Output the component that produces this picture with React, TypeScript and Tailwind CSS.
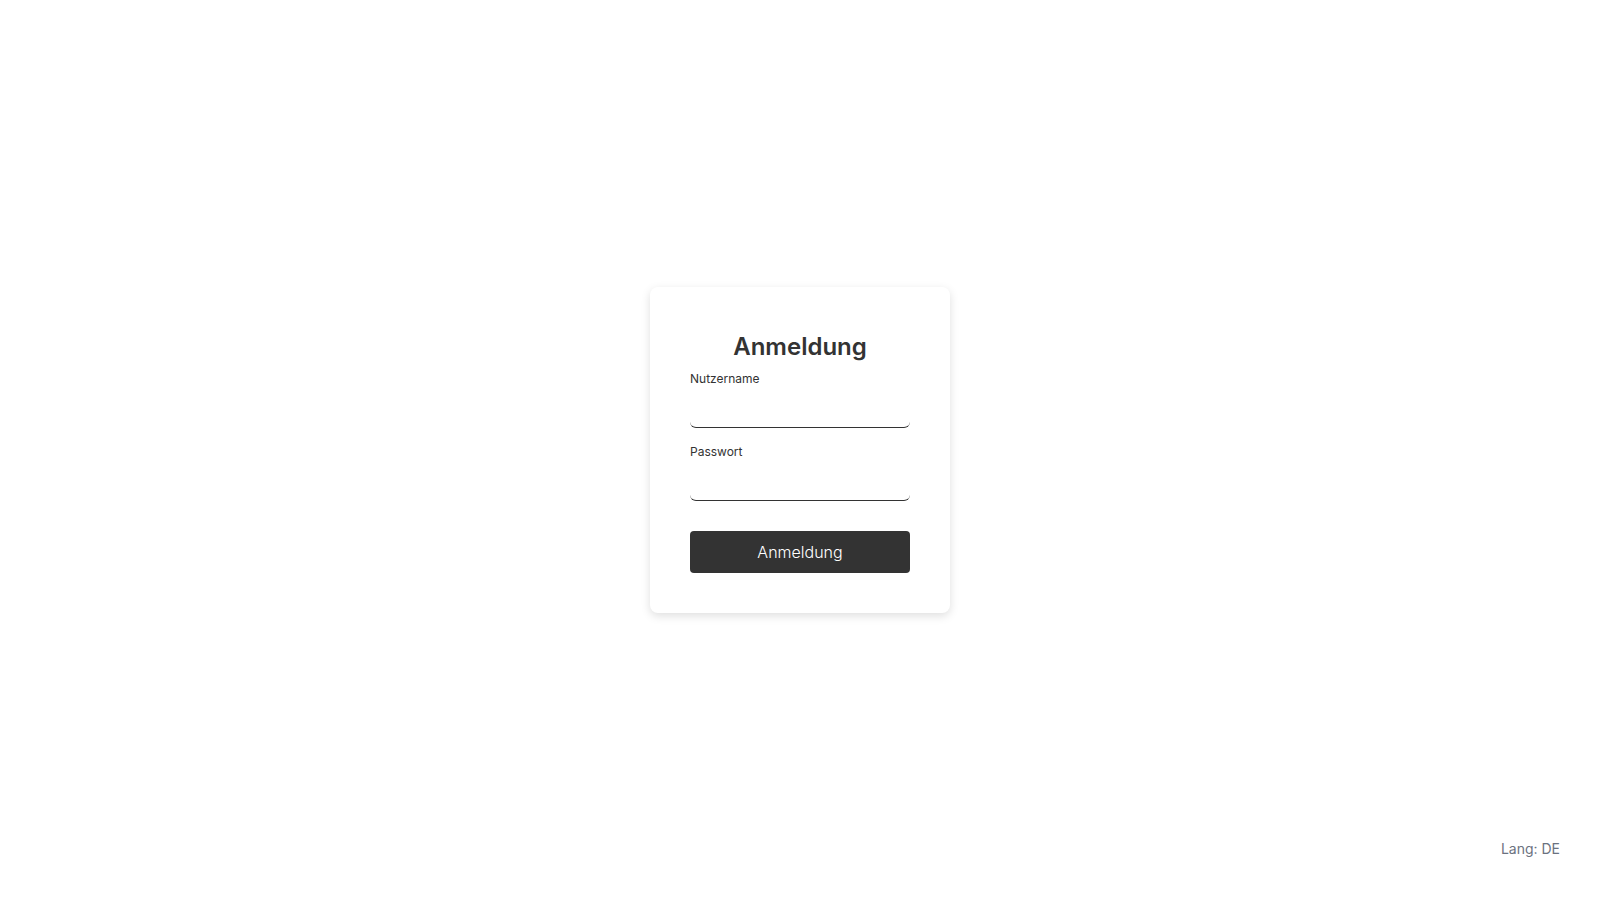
import { useState } from "react";

const font = { fontFamily: "Inter, 'Noto Sans', sans-serif" };

interface FieldProps {
  id: string;
  label: string;
  type: string;
  value: string;
  onChange: (v: string) => void;
}

const Field = ({ id, label, type, value, onChange }: FieldProps) => (
  <div className="flex flex-col">
    <label htmlFor={id} className="mb-[3px] text-[12px] leading-5 text-[#333333]">
      {label}
    </label>
    <input
      id={id}
      type={type}
      value={value}
      onChange={(e) => onChange(e.target.value)}
      className="h-9 w-full rounded-md border-b border-[#333333] bg-white px-2 text-sm text-[#333333] outline-none"
    />
  </div>
);

export default function App() {
  const [user, setUser] = useState("");
  const [pass, setPass] = useState("");

  return (
    <div className="relative flex min-h-screen items-center justify-center bg-white" style={font}>
      <div className="flex w-[300px] flex-col rounded-lg bg-white px-10 pt-[44px] pb-10 shadow-[0_3px_10px_rgba(0,0,0,0.13)]">
        <h1 className="mb-1.5 text-center text-2xl leading-8 font-semibold text-[#333333]">Anmeldung</h1>
        <Field id="user" label="Nutzername" type="text" value={user} onChange={setUser} />
        <div className="mt-3.5">
          <Field id="pass" label="Passwort" type="password" value={pass} onChange={setPass} />
        </div>
        <button className="mt-[30px] h-[42px] w-full rounded-[4px] bg-[#333333] text-base font-light text-white">
          Anmeldung
        </button>
      </div>
      <div className="absolute right-10 bottom-[41px] text-sm leading-5 text-[#6b7280]">Lang: DE</div>
    </div>
  );
}
